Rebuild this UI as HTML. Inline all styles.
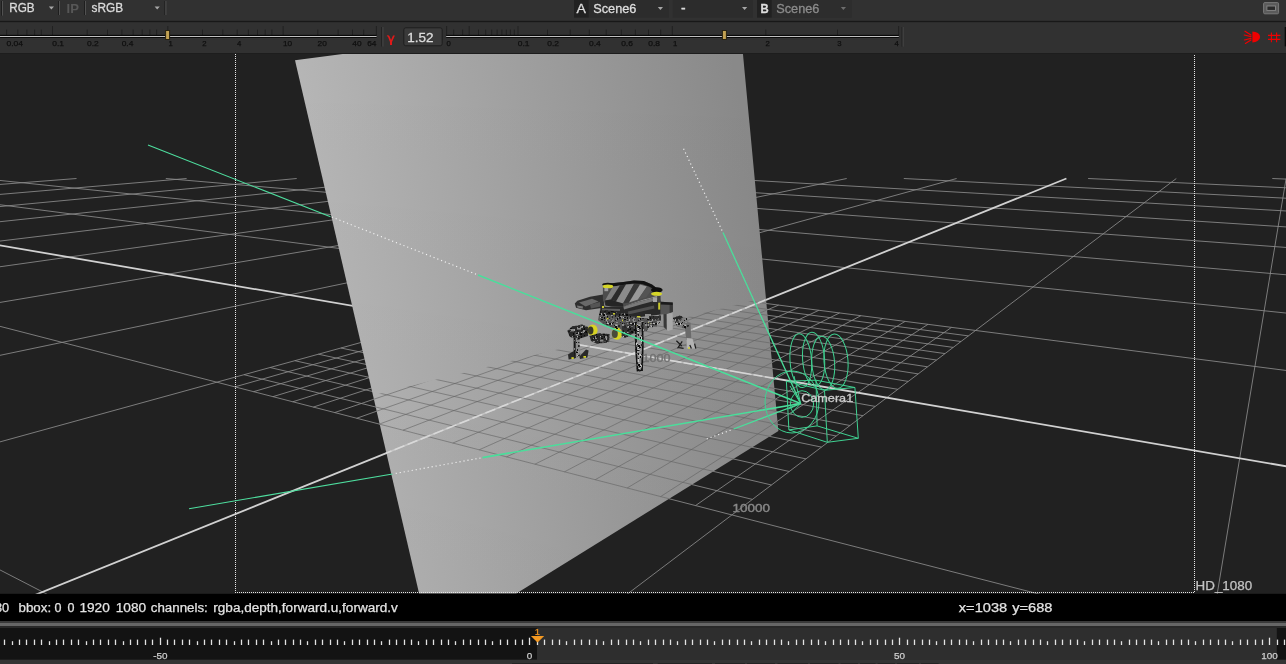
<!DOCTYPE html>
<html>
<head>
<meta charset="utf-8">
<title>Viewer</title>
<style>
html,body{margin:0;padding:0;background:#222;}
body{width:1286px;height:664px;overflow:hidden;position:relative;font-family:"Liberation Sans",sans-serif;}
#root{position:absolute;left:0;top:0;width:1286px;height:664px;overflow:hidden;background:#222;}
svg{position:absolute;left:0;top:0;opacity:0.9999;will-change:transform;}
svg text{font-family:"Liberation Sans",sans-serif;}
</style>
</head>
<body>
<div id="root">
<svg width="1286" height="664" viewBox="0 0 1286 664">
<defs>
  <clipPath id="vp"><rect x="0" y="54" width="1286" height="540"/></clipPath>
  <clipPath id="front"><polygon points="372.4,395.5 765.3,297.6 778.4,431.0 516.3,593.5 419.1,593.5"/></clipPath>
  <clipPath id="cardclip"><polygon points="295.0,60.2 347.2,53.4 742.9,53.4 778.4,431.0 516.3,593.5 419.1,593.5"/></clipPath>
  <linearGradient id="cardg" gradientUnits="userSpaceOnUse" x1="300" y1="300" x2="760" y2="226.4">
    <stop offset="0" stop-color="#bababa"/>
    <stop offset="1" stop-color="#8a8a8a"/>
  </linearGradient>
  <linearGradient id="cardv" gradientUnits="userSpaceOnUse" x1="0" y1="53" x2="0" y2="593">
    <stop offset="0" stop-color="#000" stop-opacity="0"/>
    <stop offset="1" stop-color="#000" stop-opacity="0.03"/>
  </linearGradient>
</defs>

<!-- ================= VIEWPORT ================= -->
<rect x="0" y="53" width="1286" height="541" fill="#222222"/>
<g clip-path="url(#vp)">
  <g stroke="#8c8c8c" stroke-opacity="0.86" stroke-width="1" fill="none">
<line x1="-33.7" y1="178.5" x2="-52894.9" y2="3940.8" />
<line x1="1456.4" y1="178.5" x2="2560.7" y2="222.4" />
<line x1="76.5" y1="178.5" x2="-48431.9" y2="3941.4" />
<line x1="1272.3" y1="178.5" x2="2732.5" y2="241.3" />
<line x1="186.6" y1="178.5" x2="-43968.9" y2="3942.0" />
<line x1="1088.1" y1="178.5" x2="2958.6" y2="266.3" />
<line x1="296.7" y1="178.5" x2="-39505.9" y2="3942.5" />
<line x1="903.8" y1="178.5" x2="3269.4" y2="300.6" />
<line x1="406.8" y1="178.5" x2="-35043.0" y2="3943.1" />
<line x1="719.4" y1="178.5" x2="3724.0" y2="350.7" />
<line x1="516.8" y1="178.5" x2="-30580.0" y2="3943.7" />
<line x1="535.0" y1="178.5" x2="4451.5" y2="431.0" />
<line x1="626.8" y1="178.5" x2="-26117.0" y2="3944.3" />
<line x1="350.4" y1="178.5" x2="5803.9" y2="580.3" />
<line x1="736.8" y1="178.5" x2="-21654.0" y2="3944.9" />
<line x1="165.8" y1="178.5" x2="9191.4" y2="954.1" />
<line x1="846.7" y1="178.5" x2="-17191.1" y2="3945.5" />
<line x1="-19.0" y1="178.5" x2="33169.8" y2="3600.1" />
<line x1="956.6" y1="178.5" x2="-12728.1" y2="3946.1" />
<line x1="-143.3" y1="186.3" x2="29080.3" y2="3951.7" />
<line x1="1176.3" y1="178.5" x2="-3802.1" y2="3947.3" />
<line x1="-456.9" y1="208.6" x2="14061.2" y2="3949.7" />
<line x1="1286.1" y1="178.5" x2="660.9" y2="3947.9" />
<line x1="-671.0" y1="223.9" x2="6551.6" y2="3948.7" />
<line x1="1395.8" y1="178.5" x2="5123.8" y2="3948.5" />
<line x1="-944.5" y1="243.3" x2="-957.9" y2="3947.7" />
<line x1="1510.1" y1="180.6" x2="9586.8" y2="3949.1" />
<line x1="-1305.9" y1="269.0" x2="-8467.5" y2="3946.7" />
<line x1="1639.2" y1="185.8" x2="14049.8" y2="3949.7" />
<line x1="-1805.9" y1="304.6" x2="-15977.0" y2="3945.7" />
<line x1="1782.6" y1="191.5" x2="18512.8" y2="3950.3" />
<line x1="-2543.2" y1="357.1" x2="-23486.6" y2="3944.7" />
<line x1="1942.8" y1="197.8" x2="22975.7" y2="3950.9" />
<line x1="-3739.1" y1="442.2" x2="-30996.1" y2="3943.7" />
<line x1="2123.1" y1="205.0" x2="27438.7" y2="3951.5" />
<line x1="-6014.7" y1="604.2" x2="-38505.7" y2="3942.7" />
<line x1="2327.3" y1="213.1" x2="31901.7" y2="3952.1" />
<line x1="-12035.7" y1="1032.7" x2="-46015.2" y2="3941.7" />
<line x1="2560.7" y1="222.4" x2="36364.7" y2="3952.7" />
<line x1="602.3" y1="282.4" x2="234.8" y2="386.9" />
<line x1="574.2" y1="283.8" x2="968.4" y2="335.9" />
<line x1="618.3" y1="284.4" x2="253.5" y2="391.7" />
<line x1="561.4" y1="287.3" x2="961.0" y2="341.5" />
<line x1="634.6" y1="286.5" x2="272.8" y2="396.7" />
<line x1="548.1" y1="291.0" x2="953.2" y2="347.4" />
<line x1="651.3" y1="288.7" x2="292.7" y2="401.8" />
<line x1="534.3" y1="294.8" x2="945.0" y2="353.6" />
<line x1="668.3" y1="290.9" x2="313.3" y2="407.1" />
<line x1="520.0" y1="298.7" x2="936.5" y2="360.0" />
<line x1="685.7" y1="293.1" x2="334.6" y2="412.6" />
<line x1="505.2" y1="302.8" x2="927.5" y2="366.8" />
<line x1="703.5" y1="295.4" x2="356.6" y2="418.3" />
<line x1="489.7" y1="307.0" x2="918.1" y2="373.9" />
<line x1="721.6" y1="297.7" x2="379.4" y2="424.1" />
<line x1="473.7" y1="311.4" x2="908.2" y2="381.4" />
<line x1="740.2" y1="300.1" x2="403.0" y2="430.2" />
<line x1="457.0" y1="316.0" x2="897.8" y2="389.3" />
<line x1="778.6" y1="305.1" x2="452.8" y2="443.1" />
<line x1="421.6" y1="325.8" x2="875.2" y2="406.4" />
<line x1="798.5" y1="307.6" x2="479.2" y2="449.8" />
<line x1="402.7" y1="331.0" x2="863.0" y2="415.7" />
<line x1="818.8" y1="310.3" x2="506.5" y2="456.9" />
<line x1="383.0" y1="336.4" x2="850.0" y2="425.5" />
<line x1="839.6" y1="312.9" x2="534.9" y2="464.2" />
<line x1="362.5" y1="342.1" x2="836.2" y2="436.0" />
<line x1="860.9" y1="315.7" x2="564.5" y2="471.8" />
<line x1="340.9" y1="348.0" x2="821.5" y2="447.1" />
<line x1="882.7" y1="318.5" x2="595.2" y2="479.7" />
<line x1="318.4" y1="354.2" x2="805.9" y2="458.9" />
<line x1="905.1" y1="321.4" x2="627.2" y2="488.0" />
<line x1="294.8" y1="360.7" x2="789.3" y2="471.5" />
<line x1="928.0" y1="324.3" x2="660.6" y2="496.6" />
<line x1="270.1" y1="367.5" x2="771.5" y2="485.0" />
<line x1="951.5" y1="327.4" x2="695.5" y2="505.6" />
<line x1="244.0" y1="374.7" x2="752.4" y2="499.4" />
  </g>
  <g stroke="#d2d2d2" stroke-width="1.8" fill="none">
<line x1="1066.4" y1="178.5" x2="-8265.1" y2="3946.7" />
<line x1="-284.8" y1="196.4" x2="21570.7" y2="3950.7" />
  </g>
  <!-- card -->
  <polygon points="295.0,60.2 347.2,53.4 742.9,53.4 778.4,431.0 516.3,593.5 419.1,593.5" fill="url(#cardg)"/>
  <polygon points="295.0,60.2 347.2,53.4 742.9,53.4 778.4,431.0 516.3,593.5 419.1,593.5" fill="url(#cardv)"/>
  <!-- grid in front of card -->
  <g clip-path="url(#front)">
    <g stroke="#646464" stroke-opacity="0.62" stroke-width="1" fill="none">
<line x1="-33.7" y1="178.5" x2="-52894.9" y2="3940.8" />
<line x1="1456.4" y1="178.5" x2="2560.7" y2="222.4" />
<line x1="76.5" y1="178.5" x2="-48431.9" y2="3941.4" />
<line x1="1272.3" y1="178.5" x2="2732.5" y2="241.3" />
<line x1="186.6" y1="178.5" x2="-43968.9" y2="3942.0" />
<line x1="1088.1" y1="178.5" x2="2958.6" y2="266.3" />
<line x1="296.7" y1="178.5" x2="-39505.9" y2="3942.5" />
<line x1="903.8" y1="178.5" x2="3269.4" y2="300.6" />
<line x1="406.8" y1="178.5" x2="-35043.0" y2="3943.1" />
<line x1="719.4" y1="178.5" x2="3724.0" y2="350.7" />
<line x1="516.8" y1="178.5" x2="-30580.0" y2="3943.7" />
<line x1="535.0" y1="178.5" x2="4451.5" y2="431.0" />
<line x1="626.8" y1="178.5" x2="-26117.0" y2="3944.3" />
<line x1="350.4" y1="178.5" x2="5803.9" y2="580.3" />
<line x1="736.8" y1="178.5" x2="-21654.0" y2="3944.9" />
<line x1="165.8" y1="178.5" x2="9191.4" y2="954.1" />
<line x1="846.7" y1="178.5" x2="-17191.1" y2="3945.5" />
<line x1="-19.0" y1="178.5" x2="33169.8" y2="3600.1" />
<line x1="956.6" y1="178.5" x2="-12728.1" y2="3946.1" />
<line x1="-143.3" y1="186.3" x2="29080.3" y2="3951.7" />
<line x1="1176.3" y1="178.5" x2="-3802.1" y2="3947.3" />
<line x1="-456.9" y1="208.6" x2="14061.2" y2="3949.7" />
<line x1="1286.1" y1="178.5" x2="660.9" y2="3947.9" />
<line x1="-671.0" y1="223.9" x2="6551.6" y2="3948.7" />
<line x1="1395.8" y1="178.5" x2="5123.8" y2="3948.5" />
<line x1="-944.5" y1="243.3" x2="-957.9" y2="3947.7" />
<line x1="1510.1" y1="180.6" x2="9586.8" y2="3949.1" />
<line x1="-1305.9" y1="269.0" x2="-8467.5" y2="3946.7" />
<line x1="1639.2" y1="185.8" x2="14049.8" y2="3949.7" />
<line x1="-1805.9" y1="304.6" x2="-15977.0" y2="3945.7" />
<line x1="1782.6" y1="191.5" x2="18512.8" y2="3950.3" />
<line x1="-2543.2" y1="357.1" x2="-23486.6" y2="3944.7" />
<line x1="1942.8" y1="197.8" x2="22975.7" y2="3950.9" />
<line x1="-3739.1" y1="442.2" x2="-30996.1" y2="3943.7" />
<line x1="2123.1" y1="205.0" x2="27438.7" y2="3951.5" />
<line x1="-6014.7" y1="604.2" x2="-38505.7" y2="3942.7" />
<line x1="2327.3" y1="213.1" x2="31901.7" y2="3952.1" />
<line x1="-12035.7" y1="1032.7" x2="-46015.2" y2="3941.7" />
<line x1="2560.7" y1="222.4" x2="36364.7" y2="3952.7" />
<line x1="602.3" y1="282.4" x2="234.8" y2="386.9" />
<line x1="574.2" y1="283.8" x2="968.4" y2="335.9" />
<line x1="618.3" y1="284.4" x2="253.5" y2="391.7" />
<line x1="561.4" y1="287.3" x2="961.0" y2="341.5" />
<line x1="634.6" y1="286.5" x2="272.8" y2="396.7" />
<line x1="548.1" y1="291.0" x2="953.2" y2="347.4" />
<line x1="651.3" y1="288.7" x2="292.7" y2="401.8" />
<line x1="534.3" y1="294.8" x2="945.0" y2="353.6" />
<line x1="668.3" y1="290.9" x2="313.3" y2="407.1" />
<line x1="520.0" y1="298.7" x2="936.5" y2="360.0" />
<line x1="685.7" y1="293.1" x2="334.6" y2="412.6" />
<line x1="505.2" y1="302.8" x2="927.5" y2="366.8" />
<line x1="703.5" y1="295.4" x2="356.6" y2="418.3" />
<line x1="489.7" y1="307.0" x2="918.1" y2="373.9" />
<line x1="721.6" y1="297.7" x2="379.4" y2="424.1" />
<line x1="473.7" y1="311.4" x2="908.2" y2="381.4" />
<line x1="740.2" y1="300.1" x2="403.0" y2="430.2" />
<line x1="457.0" y1="316.0" x2="897.8" y2="389.3" />
<line x1="778.6" y1="305.1" x2="452.8" y2="443.1" />
<line x1="421.6" y1="325.8" x2="875.2" y2="406.4" />
<line x1="798.5" y1="307.6" x2="479.2" y2="449.8" />
<line x1="402.7" y1="331.0" x2="863.0" y2="415.7" />
<line x1="818.8" y1="310.3" x2="506.5" y2="456.9" />
<line x1="383.0" y1="336.4" x2="850.0" y2="425.5" />
<line x1="839.6" y1="312.9" x2="534.9" y2="464.2" />
<line x1="362.5" y1="342.1" x2="836.2" y2="436.0" />
<line x1="860.9" y1="315.7" x2="564.5" y2="471.8" />
<line x1="340.9" y1="348.0" x2="821.5" y2="447.1" />
<line x1="882.7" y1="318.5" x2="595.2" y2="479.7" />
<line x1="318.4" y1="354.2" x2="805.9" y2="458.9" />
<line x1="905.1" y1="321.4" x2="627.2" y2="488.0" />
<line x1="294.8" y1="360.7" x2="789.3" y2="471.5" />
<line x1="928.0" y1="324.3" x2="660.6" y2="496.6" />
<line x1="270.1" y1="367.5" x2="771.5" y2="485.0" />
<line x1="951.5" y1="327.4" x2="695.5" y2="505.6" />
<line x1="244.0" y1="374.7" x2="752.4" y2="499.4" />
    </g>
    <g stroke="#d8d8d8" stroke-opacity="0.6" stroke-width="1.5" fill="none">
      <line x1="-284.8" y1="196.4" x2="21570.7" y2="3950.7" /><line x1="1066.4" y1="178.5" x2="-8265.1" y2="3946.7" />
    </g>
    <g stroke="#e2e2e2" stroke-opacity="0.7" stroke-width="1.6" fill="none">
      <g stroke-dasharray="22 2 9 2.5"><line x1="-284.8" y1="196.4" x2="21570.7" y2="3950.7" /></g>
      <g stroke-dasharray="10.5 3.5"><line x1="1066.4" y1="178.5" x2="-8265.1" y2="3946.7" /></g>
    </g>
  </g>
  <!-- format dotted lines -->
  <g stroke="#e8e8e8" stroke-width="1" stroke-dasharray="1 1" fill="none" shape-rendering="crispEdges">
    <line x1="235.5" y1="54" x2="235.5" y2="593"/>
    <line x1="1194.5" y1="53" x2="1194.5" y2="592"/>
    <line x1="235" y1="592.5" x2="1194" y2="592.5"/>
  </g>
  <!-- labels -->
  <text x="642.6" y="361.8" font-size="11.8" fill="#747474" stroke="#747474" stroke-width="0.45" textLength="28" lengthAdjust="spacingAndGlyphs">1000</text>
  <text x="732.4" y="511.8" font-size="11.8" fill="#888" stroke="#888" stroke-width="0.4" textLength="37.6" lengthAdjust="spacingAndGlyphs">10000</text>
  <!-- robot -->
  <defs>
    <clipPath id="rbclip">
      <polygon points="600,310 612,311 628,314 640,318 648,318 660.8,314.6 660.8,322 648,330 636,334 620,330 606,326 598,320"/>
      <polygon points="567.4,331 572,326.6 582,324.6 588,327 588,336 580,338.6 570,337"/>
      <polygon points="589.6,336 598,333.6 609.6,334 609,342.6 597,343.8 591,341"/>
      <polygon points="635,322 642.6,322 643.2,346 642.6,371 637,371.8 635.6,352 634.6,340"/>
      <polygon points="673,318 680,315.6 687.6,318.6 689.4,326 684.6,329 677,326.6"/>
      <polygon points="573.8,338 579.6,338 579.8,356 574.6,358.4"/>
      <polygon points="622,326 633,322 634,333 625,338 621.6,336"/>
    </clipPath>
    <pattern id="rbnoise" width="23" height="19" patternUnits="userSpaceOnUse">
<rect x="1" y="0" width="1" height="1" fill="#0c0c0c"/><rect x="3" y="0" width="1" height="1" fill="#2a2a2a"/><rect x="4" y="0" width="1" height="1" fill="#4c4c4c"/><rect x="5" y="0" width="1" height="1" fill="#4c4c4c"/><rect x="9" y="0" width="2" height="1" fill="#b8b8b8"/><rect x="11" y="0" width="2" height="2" fill="#1a1a1a"/><rect x="12" y="0" width="2" height="1" fill="#0c0c0c"/><rect x="13" y="0" width="1" height="2" fill="#b8b8b8"/><rect x="14" y="0" width="1" height="1" fill="#0c0c0c"/><rect x="1" y="1" width="2" height="2" fill="#8c8c8c"/><rect x="5" y="1" width="1" height="2" fill="#4c4c4c"/><rect x="6" y="1" width="2" height="1" fill="#5a5a5a"/><rect x="8" y="1" width="2" height="2" fill="#2a2a2a"/><rect x="17" y="1" width="2" height="2" fill="#8c8c8c"/><rect x="8" y="2" width="2" height="1" fill="#4c4c4c"/><rect x="16" y="2" width="1" height="1" fill="#1a1a1a"/><rect x="18" y="2" width="1" height="2" fill="#b8b8b8"/><rect x="20" y="2" width="2" height="2" fill="#2a2a2a"/><rect x="3" y="3" width="2" height="2" fill="#2a2a2a"/><rect x="5" y="3" width="1" height="1" fill="#4c4c4c"/><rect x="6" y="3" width="2" height="1" fill="#6e6e6e"/><rect x="7" y="3" width="1" height="1" fill="#b8b8b8"/><rect x="8" y="3" width="1" height="2" fill="#1a1a1a"/><rect x="10" y="3" width="2" height="1" fill="#6e6e6e"/><rect x="15" y="3" width="2" height="2" fill="#5a5a5a"/><rect x="17" y="3" width="2" height="2" fill="#0c0c0c"/><rect x="6" y="4" width="2" height="1" fill="#8c8c8c"/><rect x="9" y="5" width="1" height="2" fill="#0c0c0c"/><rect x="18" y="5" width="2" height="1" fill="#0c0c0c"/><rect x="7" y="6" width="2" height="1" fill="#1a1a1a"/><rect x="12" y="6" width="1" height="1" fill="#2a2a2a"/><rect x="13" y="6" width="1" height="2" fill="#0c0c0c"/><rect x="17" y="6" width="2" height="1" fill="#6e6e6e"/><rect x="22" y="6" width="2" height="2" fill="#a0a0a0"/><rect x="2" y="7" width="1" height="2" fill="#1a1a1a"/><rect x="6" y="7" width="2" height="1" fill="#1a1a1a"/><rect x="12" y="7" width="1" height="1" fill="#2a2a2a"/><rect x="14" y="7" width="2" height="1" fill="#0c0c0c"/><rect x="10" y="8" width="2" height="2" fill="#0c0c0c"/><rect x="16" y="8" width="2" height="1" fill="#1a1a1a"/><rect x="18" y="8" width="1" height="1" fill="#5a5a5a"/><rect x="0" y="9" width="2" height="2" fill="#4c4c4c"/><rect x="3" y="9" width="1" height="2" fill="#a0a0a0"/><rect x="6" y="9" width="2" height="1" fill="#a0a0a0"/><rect x="7" y="9" width="1" height="1" fill="#6e6e6e"/><rect x="9" y="9" width="2" height="1" fill="#1a1a1a"/><rect x="1" y="10" width="2" height="1" fill="#0c0c0c"/><rect x="5" y="10" width="2" height="2" fill="#0c0c0c"/><rect x="8" y="10" width="1" height="1" fill="#2a2a2a"/><rect x="21" y="10" width="1" height="2" fill="#0c0c0c"/><rect x="13" y="11" width="1" height="1" fill="#a0a0a0"/><rect x="14" y="11" width="2" height="1" fill="#8c8c8c"/><rect x="15" y="11" width="2" height="1" fill="#4c4c4c"/><rect x="17" y="11" width="1" height="2" fill="#1a1a1a"/><rect x="4" y="12" width="1" height="2" fill="#4c4c4c"/><rect x="9" y="12" width="1" height="2" fill="#0c0c0c"/><rect x="14" y="12" width="1" height="2" fill="#2a2a2a"/><rect x="20" y="12" width="2" height="1" fill="#2a2a2a"/><rect x="2" y="13" width="1" height="1" fill="#b8b8b8"/><rect x="3" y="13" width="2" height="1" fill="#1a1a1a"/><rect x="6" y="13" width="1" height="2" fill="#0c0c0c"/><rect x="9" y="13" width="1" height="1" fill="#2a2a2a"/><rect x="20" y="13" width="1" height="1" fill="#8c8c8c"/><rect x="21" y="13" width="2" height="2" fill="#1a1a1a"/><rect x="2" y="14" width="1" height="2" fill="#5a5a5a"/><rect x="11" y="14" width="1" height="2" fill="#2a2a2a"/><rect x="14" y="14" width="1" height="2" fill="#5a5a5a"/><rect x="19" y="14" width="1" height="2" fill="#0c0c0c"/><rect x="21" y="14" width="2" height="1" fill="#2a2a2a"/><rect x="3" y="15" width="2" height="2" fill="#0c0c0c"/><rect x="8" y="15" width="1" height="2" fill="#a0a0a0"/><rect x="11" y="15" width="1" height="2" fill="#6e6e6e"/><rect x="13" y="15" width="1" height="2" fill="#4c4c4c"/><rect x="18" y="15" width="1" height="1" fill="#8c8c8c"/><rect x="2" y="16" width="1" height="1" fill="#4c4c4c"/><rect x="3" y="16" width="2" height="1" fill="#4c4c4c"/><rect x="6" y="16" width="1" height="1" fill="#2a2a2a"/><rect x="17" y="16" width="1" height="1" fill="#1a1a1a"/><rect x="10" y="17" width="2" height="2" fill="#4c4c4c"/><rect x="22" y="17" width="2" height="2" fill="#6e6e6e"/><rect x="5" y="18" width="2" height="2" fill="#4c4c4c"/><rect x="6" y="18" width="2" height="2" fill="#4c4c4c"/><rect x="8" y="18" width="1" height="1" fill="#1a1a1a"/><rect x="15" y="18" width="1" height="1" fill="#1a1a1a"/><rect x="18" y="18" width="2" height="1" fill="#8c8c8c"/><rect x="19" y="18" width="1" height="2" fill="#8c8c8c"/><rect x="22" y="18" width="2" height="2" fill="#2a2a2a"/>
    </pattern>
  </defs>
  <g id="robot" shape-rendering="auto">
    <!-- far right leg -->
    <polygon points="663.4,314 672.6,313 672.8,329.5 668,331 663.6,327" fill="#a9a9a9"/>
    <polygon points="663.4,314 666.6,314 666.8,330 663.6,327" fill="#3a3a3a"/>
    <polygon points="673,318 680,315.6 687.6,318.6 689.4,326 684.6,329 677,326.6" fill="#7d7d7d"/>
    <polygon points="673,318 680,315.6 683,317.6 676,322" fill="#2a2a2a"/>
    <polygon points="684,322 690.4,322.4 691.4,340 686.4,340" fill="#6c6c6c"/>
    <polygon points="686.6,338 692.4,338.6 695.6,348.6 686.8,348.6" fill="#b4b4b4"/>
    <path d="M676.4 340.8 l5.4 5.2 M682.2 341.4 l-4.6 7 M679 347.6 l4.6 0.8 M689.8 345 l1.6 3.6 M694.6 343.6 l1.2 5" stroke="#1c1c1c" stroke-width="1.2" fill="none"/>
    <rect x="688.2" y="347.2" width="1.6" height="1.6" fill="#d8d828"/>
    <!-- left gun arm -->
    <polygon points="574.8,303.4 577.4,300.8 590,296.8 603,294.6 604.6,307.4 598,308.6 586,310.2 576,307.8" fill="#303030"/>
    <polygon points="579,302.6 592,298.8 598.6,301.4 585.6,306.6" fill="#6a6a6a"/><polygon points="590,304.6 600,302 600.4,306.6 591,308.4" fill="#555"/>
    <polygon points="577,305.6 583,306.6 582.6,308.8 577.4,307.6" fill="#777"/>
    <!-- main hull -->
    <!-- upper slab -->
    <polygon points="602.9,285 614,283 623.4,282 634,280.6 643.8,281 652,284.6 659.2,290 660,294.4 652,297.4 643.8,299.4 632,303.4 623.4,306.8 612,306.6 605.4,305.5 602.9,299" fill="#4e4e4e"/>
    <polygon points="602.9,285 614,283 623.4,282 634,280.6 643.8,281 652,284.6 659.2,290 656,290.6 649,286.6 642,284 633,283.6 623,285 613,286.4 604,288.4" fill="#141414"/>
    <!-- diagonal stripes -->
    <polygon points="613,286.6 620,285.4 611,299.6 605,300.4" fill="#7e7e7e"/>
    <polygon points="620,285.4 626,284.6 616,301.6 611,299.6" fill="#2c2c2c"/>
    <polygon points="626,284.6 634,284 623,303.6 616,301.6" fill="#8c8c8c"/>
    <polygon points="634,284 640,284.4 629,302.4 623,303.6" fill="#3a3a3a"/>
    <polygon points="640,284.4 647,286.6 638,299.6 629,302.4" fill="#9a9a9a"/>
    <polygon points="647,286.6 652,289.6 646,297.6 638,299.6" fill="#555"/>
    <polygon points="605,300.4 611,299.6 616,301.6 623,303.6 623.4,306.8 612,306.6 605.4,305.5" fill="#262626"/>
    <!-- lower slab -->
    <polygon points="600.3,306.8 623.4,306.8 640,301.6 659.2,296.6 660.8,301.8 660.8,314.6 640,317 623.4,316 600.3,314.5" fill="#2a2a2a"/>
    <polygon points="623.4,306.8 640,301.6 659.2,296.6 659.6,299.4 641,304.6 624,309.6" fill="#7a7a7a"/>
    <polygon points="628,311.6 654,305.6 654.4,308.6 628.4,314.4" fill="#505050"/>
    <polygon points="602,308.6 620,309 620,311 602,310.6" fill="#5c5c5c"/>
    <!-- caps -->
    <ellipse cx="607.8" cy="284.6" rx="5.6" ry="1.9" fill="#121212"/>
    <ellipse cx="607.9" cy="286.4" rx="5.3" ry="1.9" fill="#d6d62a"/>
    <rect x="604.4" y="288" width="3.8" height="3.2" fill="#a0a0a0"/>
    <ellipse cx="656.8" cy="290" rx="5.8" ry="2.8" fill="#101010"/>
    <ellipse cx="656.6" cy="293.8" rx="5.6" ry="2" fill="#d6d62a"/>
    <rect x="653" y="297.4" width="4.2" height="4.6" fill="#a6a6a6"/>
    <rect x="657.2" y="296" width="3.4" height="6" fill="#444"/>
    <rect x="658.2" y="302.6" width="2" height="7" fill="#c8c830"/>
    <!-- right arm box -->
    <polygon points="660.8,301.8 672.8,302.6 672.9,311.8 667,314 660.8,314.4" fill="#565656"/>
    <polygon points="660.8,301.8 672.8,302.6 672.8,305 660.8,304.6" fill="#1c1c1c"/>
    <polygon points="669.6,305 672.9,305 672.9,311.8 669.6,313" fill="#3a3a3a"/>
    <!-- under-body clutter -->
    <polygon points="600,310 612,311 628,314 640,318 648,318 648,330 636,334 620,330 606,326 598,320" fill="#2e2e2e" fill-opacity="0.62"/>
    <g fill="#8e8e8e">
      <rect x="604" y="314" width="3" height="2.4"/><rect x="611" y="318.6" width="2.6" height="3"/>
      <rect x="619" y="316" width="3.4" height="2.2"/><rect x="626" y="321" width="2.6" height="3.6"/>
      <rect x="633" y="318" width="2.4" height="4"/><rect x="641" y="321" width="3" height="2.6"/>
      <rect x="615" y="324.4" width="3" height="2"/><rect x="607" y="321" width="2" height="2.4"/>
      <rect x="645" y="314" width="6" height="3" /><rect x="652" y="318" width="4" height="3"/>
    </g>
    <g fill="#c9c92e">
      <rect x="613" y="313" width="2" height="1.6"/><rect x="622" y="319.6" width="2" height="1.6"/>
      <rect x="606.6" y="317.6" width="1.8" height="1.8"/><rect x="637" y="316" width="3.4" height="1.4"/>
      <rect x="648" y="322.6" width="2.2" height="1.4"/><rect x="602" y="306" width="2" height="2"/>
    </g>
    <rect x="649" y="316" width="12" height="4.6" fill="#333"/>
    <rect x="652" y="321" width="5" height="5.6" fill="#555"/>
    <!-- left front leg: shoulder / rings -->
    <polygon points="567.4,331 572,326.6 582,324.6 588,327 588,336 580,338.6 570,337" fill="#2a2a2a"/>
    <g fill="#8c8c8c"><rect x="571" y="329" width="3" height="2.4"/><rect x="577" y="327" width="4" height="2.6"/><rect x="575.6" y="333" width="3" height="2.4"/><rect x="582.6" y="330" width="2.6" height="3"/></g>
    <ellipse cx="592.6" cy="330.2" rx="5" ry="5.8" fill="#d8d424"/>
    <ellipse cx="590.6" cy="330.4" rx="2.8" ry="4" fill="#3a3a2a"/>
    <polygon points="589.6,336 598,333.6 609.6,334 609,342.6 597,343.8 591,341" fill="#2c2c2c"/>
    <g fill="#8a8a8a"><rect x="594" y="337" width="3" height="2"/><rect x="600" y="339.6" width="3.4" height="2"/><rect x="604.6" y="336" width="2.6" height="2.4"/></g>
    <ellipse cx="617" cy="333.6" rx="5.2" ry="6.2" fill="#d8d424"/>
    <ellipse cx="614.8" cy="333.8" rx="3" ry="4.2" fill="#4a4a3a"/>
    <polygon points="622,326 633,322 634,333 625,338 621.6,336" fill="#333"/>
    <!-- left front leg: lower -->
    <polygon points="573.8,338 579.6,338 579.8,356 574.6,358.4" fill="#8a8a8a"/>
    <polygon points="573.6,338 575.6,338 575.8,358 573.6,358.6" fill="#181818"/>
    <polygon points="568,354.6 573.8,351 574.6,358.6 568.6,359.4" fill="#2a2a2a"/>
    <polygon points="579.4,356.6 586,349.6 588.6,350.6 587.4,357.6 580,359" fill="#2a2a2a"/>
    <rect x="571.4" y="357.2" width="2.4" height="1.8" fill="#d4d42a"/>
    <rect x="583.4" y="356" width="2.6" height="1.8" fill="#d4d42a"/>
    <!-- middle (front) leg -->
    <polygon points="635,322 642.6,322 643.2,346 642.6,371 637,371.8 635.6,352 634.6,340" fill="#8e8e8e" fill-opacity="0.55"/><path d="M635.6 322 L636.2 352 L637.6 371.4 M642.4 322 L642.8 346 L642 371" stroke="#111" stroke-width="1.7" fill="none"/><path d="M637.4 369 q2 3.4 4.6 0.6" stroke="#111" stroke-width="1.4" fill="none"/>
    <g fill="#cfcfcf">
      <rect x="637.4" y="324" width="1.6" height="9"/><rect x="640.6" y="336" width="1.4" height="6"/>
      <rect x="637.8" y="347" width="1.8" height="4"/><rect x="639.8" y="354" width="1.6" height="3.6"/>
      <rect x="637.6" y="359" width="1.6" height="3"/><rect x="640.2" y="364" width="1.6" height="3.4"/>
      <rect x="636" y="342.6" width="1.4" height="2.6"/><rect x="638.6" y="367.6" width="1.4" height="2.4"/>
    </g>
    <rect x="636.6" y="325" width="2.6" height="2" fill="#c8c830"/>
    <g clip-path="url(#rbclip)"><rect x="560" y="275" width="140" height="100" fill="url(#rbnoise)"/></g>
  </g>

  <!-- camera frustum + wireframe -->
  <g id="cam" fill="none" stroke="#40d292" stroke-width="1" stroke-linecap="butt">
    <!-- frustum lines (solid parts) -->
    <g stroke="#4bdf9c" stroke-width="1.3">
    <path d="M800.7 403.5 L478 275" stroke-width="1.5"/><path d="M330.5 216.7 L148 145.1" stroke="#4fe0a0" stroke-width="1.1"/>
    <path d="M800.7 403.5 L723 232.5"/>
    <path d="M800.7 403.5 L482.5 457.6" stroke-width="1.6"/><path d="M392.5 474 L189 508.7" stroke="#4fe0a0" stroke-width="1.1"/>
    <path d="M800.7 403.5 L733.6 429"/>
    </g>
    <!-- reels -->
    <ellipse cx="800.8" cy="360.6" rx="10.8" ry="27" transform="rotate(-4 800.8 360.6)"/>
    <ellipse cx="813.6" cy="359.2" rx="11" ry="27" transform="rotate(-4 813.6 359.2)"/>
    <ellipse cx="823.2" cy="363" rx="11.4" ry="26.8" transform="rotate(-4 823.2 363)"/>
    <ellipse cx="836" cy="361.2" rx="12" ry="27.2" transform="rotate(-4 836 361.2)"/>
    <!-- body box -->
    <path d="M786.4 381.3 L816 380.2 L854.9 387.5 L824.5 390.3 Z"/>
    <path d="M788.9 429.9 L817.1 425.9 L858.3 438.3 L827.3 442.3 Z"/>
    <path d="M786.4 381.3 L788.9 429.9 M816 380.2 L817.1 425.9 M854.9 387.5 L858.3 438.3 M824.5 390.3 L827.3 442.3"/>
    <!-- lens -->
    <ellipse cx="792" cy="402" rx="27" ry="31"/>
    <ellipse cx="802" cy="404" rx="11.6" ry="13.3"/>
    <path d="M800.7 403.5 L794 376 M800.7 403.5 L790 386 M800.7 403.5 L788.6 409 M800.7 403.5 L790.6 414"/>
  </g>
  <g fill="none" stroke="#f6f6f6" stroke-width="1.15" stroke-dasharray="1.1 2.95">
    <path d="M476 274.2 L331.5 216.9"/>
    <path d="M722 230.4 L683 147.5"/>
    <path d="M480.5 458 L393.5 473.8"/>
    <path d="M730.6 430.2 L705 439.6"/>
  </g>
  <text x="801.2" y="401.6" font-size="11.8" fill="#cfcfcf" stroke="#cfcfcf" stroke-width="0.3" textLength="52" lengthAdjust="spacingAndGlyphs">Camera1</text>

  <text x="1195.6" y="589.9" font-size="12" fill="#c4c4c4" stroke="#c4c4c4" stroke-width="0.25" textLength="56.5" lengthAdjust="spacingAndGlyphs">HD_1080</text>
</g>

<!-- ================= TOP TOOLBAR ================= -->
<rect x="0" y="0" width="1286" height="53" fill="#323232"/>
<rect x="0" y="20" width="1286" height="3" fill="#2d2d2d"/><rect x="0" y="21" width="1286" height="1" fill="#191919"/>
<rect x="0" y="53" width="1286" height="1" fill="#1e1e1e"/>
<!-- row1 separators -->
<g fill="#1f1f1f">
  <rect x="1" y="1" width="1" height="14.6"/>
  <rect x="58" y="1" width="1" height="14"/>
  <rect x="84" y="1" width="1" height="14"/>
  <rect x="164.4" y="1" width="1" height="14"/>
</g>
<g fill="#525252">
  <rect x="2" y="1" width="1" height="14.6"/>
  <rect x="59" y="1" width="1" height="14"/>
  <rect x="85" y="1" width="1" height="14"/>
  <rect x="165.4" y="1" width="1" height="14"/>
</g>
<g font-size="12.3" fill="#dcdcdc" stroke="#dcdcdc" stroke-width="0.3">
  <text x="9.2" y="12.05" textLength="25.4" lengthAdjust="spacingAndGlyphs">RGB</text>
  <text x="91.6" y="12.05" textLength="31.6" lengthAdjust="spacingAndGlyphs">sRGB</text>
  <text x="66.6" y="12.8" font-size="13.4" fill="#585858" stroke="none" font-weight="bold" textLength="12.4" lengthAdjust="spacingAndGlyphs">IP</text>
</g>
<path d="M48.8 6.6 h5.2 l-2.6 2.9z M154.6 6.6 h5.2 l-2.6 2.9z" fill="#a8a8a8"/>
<!-- A / B inputs -->
<rect x="574" y="0" width="14.8" height="17.6" fill="#222"/>
<rect x="588.8" y="0" width="80.2" height="17.6" fill="#2d2d2d"/>
<rect x="672.6" y="0" width="80.2" height="17.6" fill="#2d2d2d"/>
<rect x="757" y="0" width="14.8" height="17.6" fill="#222"/>
<rect x="771.8" y="0" width="80" height="17.6" fill="#2e2e2e"/>
<g font-size="12.3" fill="#dedede" stroke="#dedede" stroke-width="0.3">
  <text x="576.6" y="13.05" textLength="9.4" lengthAdjust="spacingAndGlyphs">A</text>
  <text x="593.2" y="13.05" textLength="43.2" lengthAdjust="spacingAndGlyphs">Scene6</text>
  <text x="681.2" y="12.4" stroke-width="0.7">-</text>
  <text x="760.4" y="13.05" font-weight="bold" textLength="8.2" lengthAdjust="spacingAndGlyphs">B</text>
  <text x="776.2" y="13.05" fill="#8c8c8c" stroke="#8c8c8c" textLength="43.2" lengthAdjust="spacingAndGlyphs">Scene6</text>
</g>
<path d="M657.8 7 h5.2 l-2.6 2.9z M742 7 h5.2 l-2.6 2.9z" fill="#a8a8a8"/>
<path d="M840.8 7 h5.2 l-2.6 2.9z" fill="#6e6e6e"/>
<!-- top-right icon -->
<rect x="1263.6" y="2.6" width="15" height="11.2" rx="1.2" fill="#5c5c5c" stroke="#7a7a7a" stroke-width="1"/>
<rect x="1266.9" y="6" width="8.6" height="4.4" fill="#2c2c2c" stroke="#8a8a8a" stroke-width="0.9"/>

<!-- row2 sliders -->
<g fill="#222222">
<rect x="6.1" y="29.5" width="1" height="5.5"/>
<rect x="17.3" y="29.5" width="1" height="5.5"/>
<rect x="26.4" y="29.5" width="1" height="5.5"/>
<rect x="34.1" y="29.5" width="1" height="5.5"/>
<rect x="40.8" y="29.5" width="1" height="5.5"/>
<rect x="52.0" y="26" width="1" height="9"/>
<rect x="86.7" y="29.5" width="1" height="5.5"/>
<rect x="107.0" y="29.5" width="1" height="5.5"/>
<rect x="121.4" y="29.5" width="1" height="5.5"/>
<rect x="132.6" y="29.5" width="1" height="5.5"/>
<rect x="141.7" y="29.5" width="1" height="5.5"/>
<rect x="149.4" y="29.5" width="1" height="5.5"/>
<rect x="156.1" y="29.5" width="1" height="5.5"/>
<rect x="167.3" y="26" width="1" height="9"/>
<rect x="202.0" y="29.5" width="1" height="5.5"/>
<rect x="222.3" y="29.5" width="1" height="5.5"/>
<rect x="236.7" y="29.5" width="1" height="5.5"/>
<rect x="247.9" y="29.5" width="1" height="5.5"/>
<rect x="257.0" y="29.5" width="1" height="5.5"/>
<rect x="264.7" y="29.5" width="1" height="5.5"/>
<rect x="271.4" y="29.5" width="1" height="5.5"/>
<rect x="282.6" y="26" width="1" height="9"/>
<rect x="317.3" y="29.5" width="1" height="5.5"/>
<rect x="337.6" y="29.5" width="1" height="5.5"/>
<rect x="352.0" y="29.5" width="1" height="5.5"/>
<rect x="363.2" y="29.5" width="1" height="5.5"/>
<rect x="375.9" y="26" width="1" height="9"/>
<rect x="446.1" y="26" width="1" height="9"/>
<rect x="453.2" y="29.5" width="1" height="5.5"/>
<rect x="462.1" y="29.5" width="1" height="5.5"/>
<rect x="468.7" y="26" width="1" height="9"/>
<rect x="478.0" y="29.5" width="1" height="5.5"/>
<rect x="485.2" y="29.5" width="1" height="5.5"/>
<rect x="491.2" y="29.5" width="1" height="5.5"/>
<rect x="496.6" y="29.5" width="1" height="5.5"/>
<rect x="501.4" y="29.5" width="1" height="5.5"/>
<rect x="505.8" y="29.5" width="1" height="5.5"/>
<rect x="509.9" y="29.5" width="1" height="5.5"/>
<rect x="513.8" y="29.5" width="1" height="5.5"/>
<rect x="517.5" y="26" width="1" height="9"/>
<rect x="547.0" y="29.5" width="1" height="5.5"/>
<rect x="569.7" y="29.5" width="1" height="5.5"/>
<rect x="588.8" y="29.5" width="1" height="5.5"/>
<rect x="605.7" y="29.5" width="1" height="5.5"/>
<rect x="620.9" y="29.5" width="1" height="5.5"/>
<rect x="634.9" y="29.5" width="1" height="5.5"/>
<rect x="648.0" y="29.5" width="1" height="5.5"/>
<rect x="660.2" y="29.5" width="1" height="5.5"/>
<rect x="671.8" y="26" width="1" height="9"/>
<rect x="765.3" y="29.5" width="1" height="5.5"/>
<rect x="837.0" y="29.5" width="1" height="5.5"/>
<rect x="898.1" y="26" width="1" height="9"/>
</g>
<rect x="0" y="34.85" width="376.6" height="3.1" fill="#0a0a0a"/>
<rect x="0" y="36" width="376.6" height="1" fill="#c0c0c0"/>
<rect x="446.2" y="34.85" width="452.6" height="3.1" fill="#0a0a0a"/>
<rect x="446.2" y="36" width="452.6" height="1" fill="#c0c0c0"/>
<g font-size="8" fill="#101010" stroke="#101010" stroke-width="0.25">
<text x="6.4" y="45.7" textLength="16.7" lengthAdjust="spacingAndGlyphs">0.04</text>
<text x="52.3" y="45.7" textLength="11.7" lengthAdjust="spacingAndGlyphs">0.1</text>
<text x="87.0" y="45.7" textLength="11.7" lengthAdjust="spacingAndGlyphs">0.2</text>
<text x="121.7" y="45.7" textLength="11.7" lengthAdjust="spacingAndGlyphs">0.4</text>
<text x="168.4" y="45.7" textLength="4.3" lengthAdjust="spacingAndGlyphs">1</text>
<text x="202.3" y="45.7" textLength="4.3" lengthAdjust="spacingAndGlyphs">2</text>
<text x="237.0" y="45.7" textLength="4.3" lengthAdjust="spacingAndGlyphs">4</text>
<text x="282.9" y="45.7" textLength="9.2" lengthAdjust="spacingAndGlyphs">10</text>
<text x="317.6" y="45.7" textLength="9.2" lengthAdjust="spacingAndGlyphs">20</text>
<text x="352.3" y="45.7" textLength="9.2" lengthAdjust="spacingAndGlyphs">40</text>
<text x="367.2" y="45.7" textLength="9.2" lengthAdjust="spacingAndGlyphs">64</text>
<text x="446.5" y="45.7" textLength="4.3" lengthAdjust="spacingAndGlyphs">0</text>
<text x="517.8" y="45.7" textLength="11.7" lengthAdjust="spacingAndGlyphs">0.1</text>
<text x="547.3" y="45.7" textLength="11.7" lengthAdjust="spacingAndGlyphs">0.2</text>
<text x="589.1" y="45.7" textLength="11.7" lengthAdjust="spacingAndGlyphs">0.4</text>
<text x="621.2" y="45.7" textLength="11.7" lengthAdjust="spacingAndGlyphs">0.6</text>
<text x="648.3" y="45.7" textLength="11.7" lengthAdjust="spacingAndGlyphs">0.8</text>
<text x="672.9" y="45.7" textLength="4.3" lengthAdjust="spacingAndGlyphs">1</text>
<text x="765.6" y="45.7" textLength="4.3" lengthAdjust="spacingAndGlyphs">2</text>
<text x="837.3" y="45.7" textLength="4.3" lengthAdjust="spacingAndGlyphs">3</text>
<text x="894.5" y="45.7" textLength="4.3" lengthAdjust="spacingAndGlyphs">4</text>
</g>
<!-- handles -->
<rect x="165.6" y="30.5" width="4" height="9" fill="#c4a354" stroke="#2a2412" stroke-width="1"/>
<rect x="722.4" y="30.5" width="4" height="9" fill="#c4a354" stroke="#2a2412" stroke-width="1"/>
<!-- separators row2 -->
<rect x="381.4" y="27" width="1" height="19.6" fill="#1c1c1c"/>
<rect x="382.4" y="27" width="1" height="19.6" fill="#4a4a4a"/>
<rect x="901.6" y="27" width="1" height="19.6" fill="#1c1c1c"/>
<rect x="902.6" y="27" width="1" height="19.6" fill="#4a4a4a"/>
<!-- gamma -->
<path d="M386.9 35.6 q1.4 -0.9 2.5 0.4 l1.7 4 l1.9 -4.6 l1.9 0 l-2.9 6.6 l0 2.9 l-2 0 l0 -2.9 l-2 -5.2 q-0.4 -0.8 -1.1 -0.4z" fill="#e21a1a"/>
<rect x="403.8" y="27.8" width="38.4" height="18" rx="2" fill="#3b3b3b" stroke="#1f1f1f" stroke-width="1"/>
<text x="407.2" y="42.2" font-size="12.3" fill="#dedede" stroke="#dedede" stroke-width="0.3" textLength="26.2" lengthAdjust="spacingAndGlyphs">1.52</text>
<!-- red icons -->
<g fill="#f00000" stroke="none">
  <path d="M1252.4 31.5 A7.7 5.45 0 0 1 1252.4 42.4 z"/>
</g>
<g stroke="#f00000" stroke-width="1.2" fill="none" stroke-linecap="round">
  <path d="M1251 35 L1245 31.2 M1251 36.6 L1244.2 35 M1251 38.4 L1244.4 40 M1251 40 L1245.4 43.4"/>
</g>
<g stroke="#f00000" stroke-width="1.1" fill="none">
  <path d="M1268 35.4 H1280.4 M1268 39.4 H1280.4 M1271.4 32.6 V42.2 M1276.6 32.6 V42.2"/>
</g>
<rect x="1284.7" y="27" width="1.3" height="19.4" fill="#0a0a0a"/>

<!-- ================= STATUS BAR ================= -->
<rect x="0" y="593.8" width="1286" height="27.2" fill="#000"/>
<g font-size="12.5" fill="#e4e4e4" stroke="#e4e4e4" stroke-width="0.25">
  <text x="-5" y="611.9" textLength="14.2" lengthAdjust="spacingAndGlyphs">30</text>
  <text x="18.5" y="611.9" textLength="32.6" lengthAdjust="spacingAndGlyphs">bbox:</text>
  <text x="54.6" y="611.9">0</text>
  <text x="67.4" y="611.9">0</text>
  <text x="79.4" y="611.9" textLength="30.4" lengthAdjust="spacingAndGlyphs">1920</text>
  <text x="115.7" y="611.9" textLength="30.4" lengthAdjust="spacingAndGlyphs">1080</text>
  <text x="150.8" y="611.9" textLength="57" lengthAdjust="spacingAndGlyphs">channels:</text>
  <text x="213.3" y="611.9" textLength="184.5" lengthAdjust="spacingAndGlyphs">rgba,depth,forward.u,forward.v</text>
  <text x="958.8" y="611.9" textLength="48.4" lengthAdjust="spacingAndGlyphs">x=1038</text>
  <text x="1012.2" y="611.9" textLength="40.2" lengthAdjust="spacingAndGlyphs">y=688</text>
</g>
<!-- ================= TIMELINE ================= -->
<rect x="0" y="621" width="1286" height="2" fill="#3a3a3a"/>
<rect x="0" y="623" width="1286" height="3.1" fill="#676767"/>
<rect x="0" y="626.1" width="1286" height="1.9" fill="#2a2a2a"/>
<rect x="0" y="628" width="1286" height="32" fill="#2f2f2f"/>
<rect x="0" y="628" width="537" height="31.8" fill="#141414"/>
<rect x="1276.8" y="628" width="10" height="31.8" fill="#141414"/>
<rect x="0" y="659.8" width="1286" height="4.2" fill="#353535"/>
<rect x="512.0" y="663" width="141.0" height="1" fill="#252525"/><rect x="657.7" y="663" width="54.3" height="1" fill="#252525"/><rect x="715.0" y="663" width="30.0" height="1" fill="#252525"/><rect x="747.0" y="663" width="28.0" height="1" fill="#252525"/><rect x="777.5" y="663" width="30.5" height="1" fill="#252525"/><rect x="810.0" y="663" width="28.5" height="1" fill="#252525"/><rect x="840.6" y="663" width="17.4" height="1" fill="#252525"/><rect x="860.0" y="663" width="15.5" height="1" fill="#252525"/><rect x="877.6" y="663" width="17.4" height="1" fill="#252525"/><rect x="897.0" y="663" width="22.0" height="1" fill="#252525"/><rect x="921.0" y="663" width="17.6" height="1" fill="#252525"/>
<g fill="#e4e4e4">
<rect x="3.85" y="639.6" width="1.3" height="5.4"/>
<rect x="11.85" y="641.2" width="1.3" height="3.8"/>
<rect x="18.85" y="639.6" width="1.3" height="5.4"/>
<rect x="25.85" y="639.6" width="1.3" height="5.4"/>
<rect x="33.85" y="639.6" width="1.3" height="5.4"/>
<rect x="40.85" y="639.6" width="1.3" height="5.4"/>
<rect x="48.85" y="641.2" width="1.3" height="3.8"/>
<rect x="55.85" y="639.6" width="1.3" height="5.4"/>
<rect x="62.85" y="639.6" width="1.3" height="5.4"/>
<rect x="70.85" y="639.6" width="1.3" height="5.4"/>
<rect x="77.85" y="639.6" width="1.3" height="5.4"/>
<rect x="85.85" y="641.2" width="1.3" height="3.8"/>
<rect x="92.85" y="639.6" width="1.3" height="5.4"/>
<rect x="99.85" y="639.6" width="1.3" height="5.4"/>
<rect x="107.85" y="639.6" width="1.3" height="5.4"/>
<rect x="114.85" y="639.6" width="1.3" height="5.4"/>
<rect x="122.85" y="641.2" width="1.3" height="3.8"/>
<rect x="129.85" y="639.6" width="1.3" height="5.4"/>
<rect x="136.85" y="639.6" width="1.3" height="5.4"/>
<rect x="144.85" y="639.6" width="1.3" height="5.4"/>
<rect x="151.85" y="639.6" width="1.3" height="5.4"/>
<rect x="159.85" y="637.7" width="1.3" height="7.3"/>
<rect x="166.85" y="639.6" width="1.3" height="5.4"/>
<rect x="173.85" y="639.6" width="1.3" height="5.4"/>
<rect x="181.85" y="639.6" width="1.3" height="5.4"/>
<rect x="188.85" y="639.6" width="1.3" height="5.4"/>
<rect x="196.85" y="641.2" width="1.3" height="3.8"/>
<rect x="203.85" y="639.6" width="1.3" height="5.4"/>
<rect x="210.85" y="639.6" width="1.3" height="5.4"/>
<rect x="218.85" y="639.6" width="1.3" height="5.4"/>
<rect x="225.85" y="639.6" width="1.3" height="5.4"/>
<rect x="233.85" y="641.2" width="1.3" height="3.8"/>
<rect x="240.85" y="639.6" width="1.3" height="5.4"/>
<rect x="247.85" y="639.6" width="1.3" height="5.4"/>
<rect x="255.85" y="639.6" width="1.3" height="5.4"/>
<rect x="262.85" y="639.6" width="1.3" height="5.4"/>
<rect x="270.85" y="641.2" width="1.3" height="3.8"/>
<rect x="277.85" y="639.6" width="1.3" height="5.4"/>
<rect x="284.85" y="639.6" width="1.3" height="5.4"/>
<rect x="292.85" y="639.6" width="1.3" height="5.4"/>
<rect x="299.85" y="639.6" width="1.3" height="5.4"/>
<rect x="306.85" y="641.2" width="1.3" height="3.8"/>
<rect x="314.85" y="639.6" width="1.3" height="5.4"/>
<rect x="321.85" y="639.6" width="1.3" height="5.4"/>
<rect x="329.85" y="639.6" width="1.3" height="5.4"/>
<rect x="336.85" y="639.6" width="1.3" height="5.4"/>
<rect x="343.85" y="641.2" width="1.3" height="3.8"/>
<rect x="351.85" y="639.6" width="1.3" height="5.4"/>
<rect x="358.85" y="639.6" width="1.3" height="5.4"/>
<rect x="366.85" y="639.6" width="1.3" height="5.4"/>
<rect x="373.85" y="639.6" width="1.3" height="5.4"/>
<rect x="380.85" y="641.2" width="1.3" height="3.8"/>
<rect x="388.85" y="639.6" width="1.3" height="5.4"/>
<rect x="395.85" y="639.6" width="1.3" height="5.4"/>
<rect x="403.85" y="639.6" width="1.3" height="5.4"/>
<rect x="410.85" y="639.6" width="1.3" height="5.4"/>
<rect x="417.85" y="641.2" width="1.3" height="3.8"/>
<rect x="425.85" y="639.6" width="1.3" height="5.4"/>
<rect x="432.85" y="639.6" width="1.3" height="5.4"/>
<rect x="440.85" y="639.6" width="1.3" height="5.4"/>
<rect x="447.85" y="639.6" width="1.3" height="5.4"/>
<rect x="454.85" y="641.2" width="1.3" height="3.8"/>
<rect x="462.85" y="639.6" width="1.3" height="5.4"/>
<rect x="469.85" y="639.6" width="1.3" height="5.4"/>
<rect x="477.85" y="639.6" width="1.3" height="5.4"/>
<rect x="484.85" y="639.6" width="1.3" height="5.4"/>
<rect x="491.85" y="641.2" width="1.3" height="3.8"/>
<rect x="499.85" y="639.6" width="1.3" height="5.4"/>
<rect x="506.85" y="639.6" width="1.3" height="5.4"/>
<rect x="514.85" y="639.6" width="1.3" height="5.4"/>
<rect x="521.85" y="639.6" width="1.3" height="5.4"/>
<rect x="528.85" y="637.7" width="1.3" height="7.3"/>
<rect x="536.85" y="639.6" width="1.3" height="5.4"/>
<rect x="543.85" y="639.6" width="1.3" height="5.4"/>
<rect x="551.85" y="639.6" width="1.3" height="5.4"/>
<rect x="558.85" y="639.6" width="1.3" height="5.4"/>
<rect x="565.85" y="641.2" width="1.3" height="3.8"/>
<rect x="573.85" y="639.6" width="1.3" height="5.4"/>
<rect x="580.85" y="639.6" width="1.3" height="5.4"/>
<rect x="588.85" y="639.6" width="1.3" height="5.4"/>
<rect x="595.85" y="639.6" width="1.3" height="5.4"/>
<rect x="602.85" y="641.2" width="1.3" height="3.8"/>
<rect x="610.85" y="639.6" width="1.3" height="5.4"/>
<rect x="617.85" y="639.6" width="1.3" height="5.4"/>
<rect x="625.85" y="639.6" width="1.3" height="5.4"/>
<rect x="632.85" y="639.6" width="1.3" height="5.4"/>
<rect x="639.85" y="641.2" width="1.3" height="3.8"/>
<rect x="647.85" y="639.6" width="1.3" height="5.4"/>
<rect x="654.85" y="639.6" width="1.3" height="5.4"/>
<rect x="662.85" y="639.6" width="1.3" height="5.4"/>
<rect x="669.85" y="639.6" width="1.3" height="5.4"/>
<rect x="676.85" y="641.2" width="1.3" height="3.8"/>
<rect x="684.85" y="639.6" width="1.3" height="5.4"/>
<rect x="691.85" y="639.6" width="1.3" height="5.4"/>
<rect x="699.85" y="639.6" width="1.3" height="5.4"/>
<rect x="706.85" y="639.6" width="1.3" height="5.4"/>
<rect x="713.85" y="641.2" width="1.3" height="3.8"/>
<rect x="721.85" y="639.6" width="1.3" height="5.4"/>
<rect x="728.85" y="639.6" width="1.3" height="5.4"/>
<rect x="736.85" y="639.6" width="1.3" height="5.4"/>
<rect x="743.85" y="639.6" width="1.3" height="5.4"/>
<rect x="750.85" y="641.2" width="1.3" height="3.8"/>
<rect x="758.85" y="639.6" width="1.3" height="5.4"/>
<rect x="765.85" y="639.6" width="1.3" height="5.4"/>
<rect x="773.85" y="639.6" width="1.3" height="5.4"/>
<rect x="780.85" y="639.6" width="1.3" height="5.4"/>
<rect x="787.85" y="641.2" width="1.3" height="3.8"/>
<rect x="795.85" y="639.6" width="1.3" height="5.4"/>
<rect x="802.85" y="639.6" width="1.3" height="5.4"/>
<rect x="810.85" y="639.6" width="1.3" height="5.4"/>
<rect x="817.85" y="639.6" width="1.3" height="5.4"/>
<rect x="824.85" y="641.2" width="1.3" height="3.8"/>
<rect x="832.85" y="639.6" width="1.3" height="5.4"/>
<rect x="839.85" y="639.6" width="1.3" height="5.4"/>
<rect x="847.85" y="639.6" width="1.3" height="5.4"/>
<rect x="854.85" y="639.6" width="1.3" height="5.4"/>
<rect x="861.85" y="641.2" width="1.3" height="3.8"/>
<rect x="869.85" y="639.6" width="1.3" height="5.4"/>
<rect x="876.85" y="639.6" width="1.3" height="5.4"/>
<rect x="884.85" y="639.6" width="1.3" height="5.4"/>
<rect x="891.85" y="639.6" width="1.3" height="5.4"/>
<rect x="898.85" y="637.7" width="1.3" height="7.3"/>
<rect x="906.85" y="639.6" width="1.3" height="5.4"/>
<rect x="913.85" y="639.6" width="1.3" height="5.4"/>
<rect x="921.85" y="639.6" width="1.3" height="5.4"/>
<rect x="928.85" y="639.6" width="1.3" height="5.4"/>
<rect x="935.85" y="641.2" width="1.3" height="3.8"/>
<rect x="943.85" y="639.6" width="1.3" height="5.4"/>
<rect x="950.85" y="639.6" width="1.3" height="5.4"/>
<rect x="958.85" y="639.6" width="1.3" height="5.4"/>
<rect x="965.85" y="639.6" width="1.3" height="5.4"/>
<rect x="972.85" y="641.2" width="1.3" height="3.8"/>
<rect x="980.85" y="639.6" width="1.3" height="5.4"/>
<rect x="987.85" y="639.6" width="1.3" height="5.4"/>
<rect x="995.85" y="639.6" width="1.3" height="5.4"/>
<rect x="1002.85" y="639.6" width="1.3" height="5.4"/>
<rect x="1009.85" y="641.2" width="1.3" height="3.8"/>
<rect x="1017.85" y="639.6" width="1.3" height="5.4"/>
<rect x="1024.85" y="639.6" width="1.3" height="5.4"/>
<rect x="1032.85" y="639.6" width="1.3" height="5.4"/>
<rect x="1039.85" y="639.6" width="1.3" height="5.4"/>
<rect x="1046.85" y="641.2" width="1.3" height="3.8"/>
<rect x="1054.85" y="639.6" width="1.3" height="5.4"/>
<rect x="1061.85" y="639.6" width="1.3" height="5.4"/>
<rect x="1069.85" y="639.6" width="1.3" height="5.4"/>
<rect x="1076.85" y="639.6" width="1.3" height="5.4"/>
<rect x="1083.85" y="641.2" width="1.3" height="3.8"/>
<rect x="1091.85" y="639.6" width="1.3" height="5.4"/>
<rect x="1098.85" y="639.6" width="1.3" height="5.4"/>
<rect x="1106.85" y="639.6" width="1.3" height="5.4"/>
<rect x="1113.85" y="639.6" width="1.3" height="5.4"/>
<rect x="1120.85" y="641.2" width="1.3" height="3.8"/>
<rect x="1128.85" y="639.6" width="1.3" height="5.4"/>
<rect x="1135.85" y="639.6" width="1.3" height="5.4"/>
<rect x="1143.85" y="639.6" width="1.3" height="5.4"/>
<rect x="1150.85" y="639.6" width="1.3" height="5.4"/>
<rect x="1157.85" y="641.2" width="1.3" height="3.8"/>
<rect x="1165.85" y="639.6" width="1.3" height="5.4"/>
<rect x="1172.85" y="639.6" width="1.3" height="5.4"/>
<rect x="1180.85" y="639.6" width="1.3" height="5.4"/>
<rect x="1187.85" y="639.6" width="1.3" height="5.4"/>
<rect x="1194.85" y="641.2" width="1.3" height="3.8"/>
<rect x="1202.85" y="639.6" width="1.3" height="5.4"/>
<rect x="1209.85" y="639.6" width="1.3" height="5.4"/>
<rect x="1217.85" y="639.6" width="1.3" height="5.4"/>
<rect x="1224.85" y="639.6" width="1.3" height="5.4"/>
<rect x="1231.85" y="641.2" width="1.3" height="3.8"/>
<rect x="1239.85" y="639.6" width="1.3" height="5.4"/>
<rect x="1246.85" y="639.6" width="1.3" height="5.4"/>
<rect x="1254.85" y="639.6" width="1.3" height="5.4"/>
<rect x="1261.85" y="639.6" width="1.3" height="5.4"/>
<rect x="1268.85" y="637.7" width="1.3" height="7.3"/>
<rect x="1276.85" y="639.6" width="1.3" height="5.4"/>
<rect x="1283.85" y="639.6" width="1.3" height="5.4"/>
</g>
<g font-size="9.9" fill="#cfcfcf" stroke="#cfcfcf" stroke-width="0.25">
<text x="160.4" y="659.2" text-anchor="middle">-50</text>
<text x="529.4" y="659.2" text-anchor="middle">0</text>
<text x="899.4" y="659.2" text-anchor="middle">50</text>
<text x="1269.4" y="659.2" text-anchor="middle">100</text>
</g>
<path d="M530.9 635.9 H544.2 L537.5 642.6z" fill="#f59a23"/>
<text x="537.2" y="634.8" font-size="9.2" font-weight="bold" fill="#e08a1e" text-anchor="middle">1</text>
</svg>
</div>
</body>
</html>
